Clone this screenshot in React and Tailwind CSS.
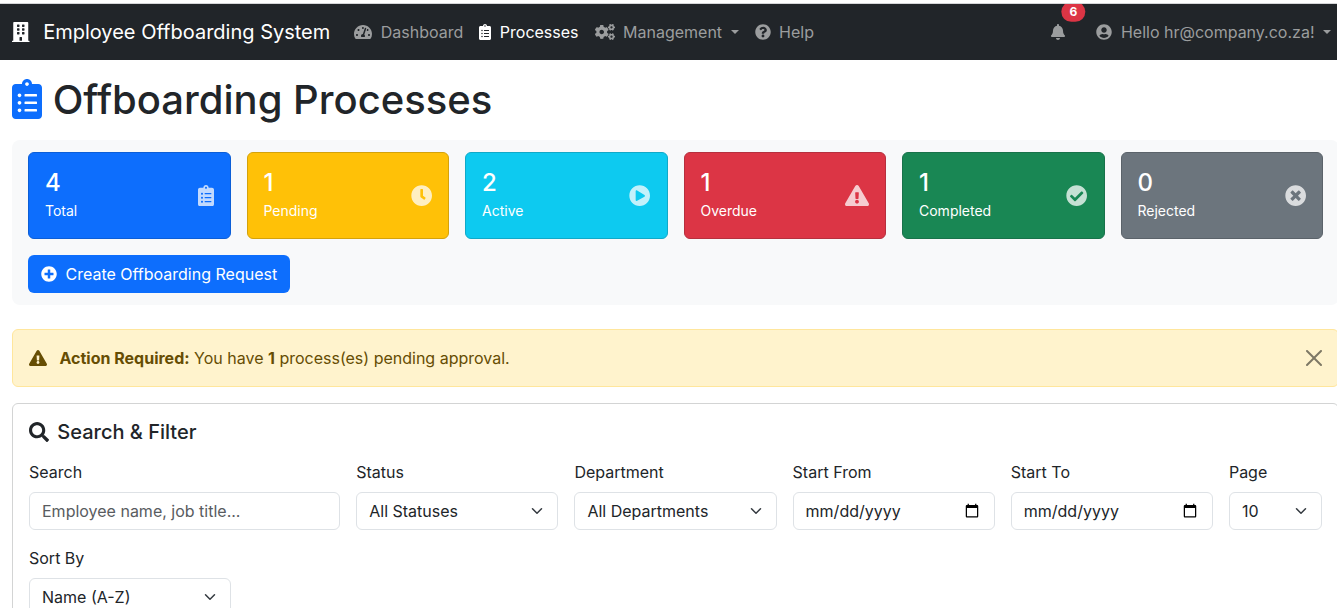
import React from "react";
import {
  FaBell,
  FaBuilding,
  FaCheckCircle,
  FaClipboardList,
  FaClock,
  FaCogs,
  FaExclamationTriangle,
  FaPlayCircle,
  FaPlusCircle,
  FaQuestionCircle,
  FaSearch,
  FaTachometerAlt,
  FaTimesCircle,
  FaUserCircle,
} from "react-icons/fa";

const iconBase = "inline-block h-[1em] align-[-0.125em]";

function Caret() {
  return (
    <span className="ml-[4px] inline-block border-x-[4.8px] border-t-[4.8px] border-x-transparent border-t-current align-[4px]" />
  );
}

function NavLink({ icon: Icon, width, label, active, caret }) {
  return (
    <a
      href="#"
      className={
        active
          ? "block px-2 py-2 whitespace-nowrap text-white"
          : "block px-2 py-2 whitespace-nowrap text-[#9b9d9e]"
      }
    >
      <Icon className={`${iconBase} ${width} mr-1`} /> {label}
      {caret && <> <Caret /></>}
    </a>
  );
}

function Navbar() {
  return (
    <nav className="flex h-14 items-center overflow-hidden bg-[#212529] pl-3">
      <a href="#" className="mr-4 text-xl leading-[30px] whitespace-nowrap text-white">
        <FaBuilding className={`${iconBase} mr-2 w-[0.875em]`} /> Employee Offboarding System
      </a>
      <div className="flex grow">
        <NavLink icon={FaTachometerAlt} width="w-[1.125em]" label="Dashboard" />
        <NavLink icon={FaClipboardList} width="w-[0.75em]" label="Processes" active />
        <NavLink icon={FaCogs} width="w-[1.25em]" label="Management" caret />
        <NavLink icon={FaQuestionCircle} width="w-[1em]" label="Help" />
      </div>
      <div className="flex">
        <a href="#" className="relative mr-[15px] block px-2 py-2 text-[#9b9d9e]">
          <FaBell className={`${iconBase} w-[0.875em]`} />
          <span className="absolute top-0 left-full -translate-x-1/2 -translate-y-1/2 rounded-full bg-[#dc3545] px-[7.8px] py-[4.2px] text-xs leading-none font-bold text-white">
            6
          </span>
        </a>
        <NavLink icon={FaUserCircle} width="w-[1em]" label="Hello hr@company.co.za!" caret />
      </div>
    </nav>
  );
}

const stats = [
  { value: 4, label: "Total", icon: FaClipboardList, width: "w-[16px]", tone: "bg-[#0d6efd] border-[#0b5ed7]" },
  { value: 1, label: "Pending", icon: FaClock, width: "w-[21.33px]", tone: "bg-[#ffc107] border-[#d4a20b]" },
  { value: 2, label: "Active", icon: FaPlayCircle, width: "w-[21.33px]", tone: "bg-[#0dcaf0] border-[#10a9c8]" },
  { value: 1, label: "Overdue", icon: FaExclamationTriangle, width: "w-[24px]", tone: "bg-[#dc3545] border-[#b6303e]" },
  { value: 1, label: "Completed", icon: FaCheckCircle, width: "w-[21.33px]", tone: "bg-[#198754] border-[#18724a]" },
  { value: 0, label: "Rejected", icon: FaTimesCircle, width: "w-[21.33px]", tone: "bg-[#6c757d] border-[#5b636a]" },
];

function StatCard({ value, label, icon: Icon, width, tone }) {
  return (
    <div className={`flex h-[87px] items-center justify-between rounded-md border p-4 text-white ${tone}`}>
      <div>
        <div className="text-2xl leading-[28.8px] font-medium">{value}</div>
        <div className="leading-6">
          <span className="text-sm leading-none">{label}</span>
        </div>
      </div>
      <Icon className={`mb-[0.4px] h-[21.33px] opacity-75 ${width}`} />
    </div>
  );
}

const control =
  "block h-[38px] w-full appearance-none rounded-md border border-[#dee2e6] bg-white px-3 py-1.5 leading-6 text-[#212529]";

function Field({ label, span, children }) {
  return (
    <div className={span}>
      <label className="mb-2 block leading-6">{label}</label>
      {children}
    </div>
  );
}

function Select({ value }) {
  return (
    <div className={`${control} flex items-center justify-between`}>
      <span className="whitespace-nowrap">{value}</span>
      <svg viewBox="0 0 16 16" className="h-3 w-4 shrink-0" fill="none" stroke="#343a40" strokeWidth="2" strokeLinecap="round" strokeLinejoin="round">
        <path d="m2 5 6 6 6-6" />
      </svg>
    </div>
  );
}

function DateField() {
  return (
    <input
      type="date"
      className={`${control} [&::-webkit-datetime-edit-day-field]:p-0 [&::-webkit-datetime-edit-month-field]:p-0 [&::-webkit-datetime-edit-year-field]:p-0`}
    />
  );
}

export default function App() {
  return (
    <div className="h-[608px] w-full overflow-hidden bg-white font-['Inter',sans-serif] text-base leading-6 text-[#212529]">
      <div className="w-[1339px]">
        <div className="h-1 border-b border-[#d5d6d8]" />
        <Navbar />
        <main className="pt-4 pl-3">
          <h1 className="mb-4 text-[40px] leading-[48px] font-medium">
            <FaClipboardList className={`${iconBase} w-[0.75em] text-[#0d6efd]`} /> Offboarding Processes
          </h1>

          <section className="mb-6 rounded-lg bg-[#f8f9fa] px-4 py-3">
            <div className="grid grid-cols-6 gap-4">
              {stats.map((s) => (
                <StatCard key={s.label} {...s} />
              ))}
            </div>
            <button className="mt-4 block h-[38px] rounded-md bg-[#0d6efd] px-[13px] text-white">
              <FaPlusCircle className={`${iconBase} mr-1 w-[1em]`} /> Create Offboarding Request
            </button>
          </section>

          <div className="mb-4 flex h-[58px] items-center justify-between rounded-md border border-[#ffe69c] bg-[#fff3cd] px-4 text-[#664d03]">
            <div>
              <FaExclamationTriangle className={`${iconBase} mr-2 w-[1.125em]`} /> <strong>Action Required:</strong> You have{" "}
              <strong>1</strong> process(es) pending approval.
            </div>
            <svg viewBox="0 0 16 16" className="h-4 w-4 opacity-50" fill="#000">
              <path d="M.293.293a1 1 0 0 1 1.414 0L8 6.586 14.293.293a1 1 0 1 1 1.414 1.414L9.414 8l6.293 6.293a1 1 0 0 1-1.414 1.414L8 9.414l-6.293 6.293a1 1 0 0 1-1.414-1.414L6.586 8 .293 1.707a1 1 0 0 1 0-1.414z" />
            </svg>
          </div>

          <section className="rounded-md border border-[#d3d4d4] p-4">
            <h5 className="mb-4 text-xl leading-6 font-medium">
              <FaSearch className={`${iconBase} mr-[3px] w-[1em]`} /> Search &amp; Filter
            </h5>
            <div className="-mx-2 grid grid-cols-12 gap-y-4">
              <Field label="Search" span="col-span-3 px-2">
                <input
                  type="text"
                  placeholder="Employee name, job title..."
                  className={`${control} placeholder:text-[#595c5f]`}
                />
              </Field>
              <Field label="Status" span="col-span-2 px-2">
                <Select value="All Statuses" />
              </Field>
              <Field label="Department" span="col-span-2 px-2">
                <Select value="All Departments" />
              </Field>
              <Field label="Start From" span="col-span-2 px-2">
                <DateField />
              </Field>
              <Field label="Start To" span="col-span-2 px-2">
                <DateField />
              </Field>
              <Field label="Page" span="col-span-1 px-2">
                <Select value="10" />
              </Field>
              <Field label="Sort By" span="col-span-2 px-2">
                <Select value="Name (A-Z)" />
              </Field>
            </div>
          </section>
        </main>
      </div>
    </div>
  );
}
